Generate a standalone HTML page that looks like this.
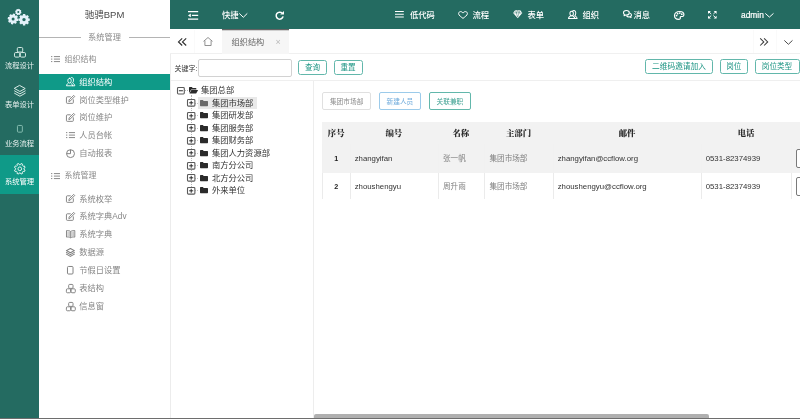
<!DOCTYPE html>
<html lang="zh-CN">
<head>
<meta charset="utf-8">
<title>驰骋BPM</title>
<style>
*{box-sizing:border-box;margin:0;padding:0}
html,body{width:800px;height:419px;overflow:hidden;background:#fff}
body{position:relative;font-family:"Liberation Sans","Noto Sans CJK SC",sans-serif;color:#333;font-size:8px;line-height:1}
#app{position:absolute;left:0;top:0;width:800px;height:419px;overflow:hidden;will-change:transform;transform:translateZ(0)}
.abs{position:absolute}
.t{position:absolute;white-space:nowrap;line-height:10px;height:10px}
svg{position:absolute;overflow:visible}
/* dark sidebar */
#s1{position:absolute;left:0;top:0;width:39px;height:418px;background:#246b61}
#s1 .act{position:absolute;left:0;top:155px;width:39px;height:39px;background:#0f9a88}
#s1 .lb{position:absolute;left:0;width:39px;text-align:center;color:#e8f1ef;font-size:7.3px;line-height:9px;height:9px;white-space:nowrap}
/* second sidebar */
#s2{position:absolute;left:39px;top:0;width:131px;height:418px;background:#fff}
#s2 .title{position:absolute;left:0;top:9.2px;width:131px;text-align:center;font-size:9.5px;line-height:12px;color:#4a4a4a}
#s2 .hr{position:absolute;top:37px;height:1px;background:#b4b4b4}
#s2 .sub{position:absolute;left:0;top:32.5px;width:131px;text-align:center;font-size:8.2px;line-height:10px;color:#8a8a8a}
#s2 .g{position:absolute;left:25.5px;font-size:8px;line-height:10px;height:10px;color:#8c8c8c;white-space:nowrap}
#s2 .i{position:absolute;left:40.3px;font-size:8.25px;line-height:10px;height:10px;color:#868686;white-space:nowrap}
#s2 .on{position:absolute;left:0;top:73.5px;width:131.5px;height:16.5px;background:#0f9a88}
/* header */
#hd{position:absolute;left:170px;top:0;width:630px;height:29px;background:#246b61}
#hd .t{color:#fff;font-size:8.3px;top:10px;font-weight:500}
/* tabs */
#tabs{position:absolute;left:170px;top:29px;width:630px;height:25px;background:#fff;border-bottom:1px solid #f0f0f0}
#tabs .cur{position:absolute;left:52px;top:0;width:67px;height:24.5px;background:#f6f6f6;border-top:1px solid #636363;box-shadow:inset 0 1px 0 #cfcfcf}
.btn{position:absolute;border:1px solid #62b7ab;border-radius:2.5px;background:#fff;color:#1b9483;text-align:center;white-space:nowrap}
.tt{font-size:8.3px;color:#333;line-height:10.4px;height:10.4px}
.b2{border:1px solid #ddd;border-radius:2px;background:#fff;font-size:6.7px;line-height:17px;text-align:center;white-space:nowrap}
.th{font-family:"Liberation Serif","Noto Serif CJK SC",serif;font-weight:900;font-size:8.4px;color:#2a2a2a;text-align:center;line-height:11px;height:11px}
.td{font-size:7.8px;color:#333;line-height:10px}
.td.zh{font-weight:400;font-size:7.6px;color:#808080}
</style>
</head>
<body>
<div id="app">
<div id="s1">
  <div class="act"></div>
  <svg style="left:0;top:0" width="39" height="30" viewBox="0 0 39 30"><g fill="#e4f2fa"><path fill-rule="evenodd" d="M17.28 18.61 L18.40 19.02 L17.98 21.08 L16.79 21.03 L16.30 21.75 L16.80 22.83 L15.05 24.00 L14.25 23.11 L13.39 23.28 L12.98 24.40 L10.92 23.98 L10.97 22.79 L10.25 22.30 L9.17 22.80 L8.00 21.05 L8.89 20.25 L8.72 19.39 L7.60 18.98 L8.02 16.92 L9.21 16.97 L9.70 16.25 L9.20 15.17 L10.95 14.00 L11.75 14.89 L12.61 14.72 L13.02 13.60 L15.08 14.02 L15.03 15.21 L15.75 15.70 L16.83 15.20 L18.00 16.95 L17.11 17.75Z M11.60 19.00 a1.5 1.5 0 1 0 3 0 a1.5 1.5 0 1 0 -3 0Z"/><path fill-rule="evenodd" d="M28.51 18.38 L29.79 18.57 L29.79 20.83 L28.51 21.02 L28.15 21.88 L28.92 22.92 L27.32 24.52 L26.28 23.75 L25.42 24.11 L25.23 25.39 L22.97 25.39 L22.78 24.11 L21.92 23.75 L20.88 24.52 L19.28 22.92 L20.05 21.88 L19.69 21.02 L18.41 20.83 L18.41 18.57 L19.69 18.38 L20.05 17.52 L19.28 16.48 L20.88 14.88 L21.92 15.65 L22.78 15.29 L22.97 14.01 L25.23 14.01 L25.42 15.29 L26.28 15.65 L27.32 14.88 L28.92 16.48 L28.15 17.52Z M22.30 19.60 a1.7 1.7 0 1 0 3.4 0 a1.7 1.7 0 1 0 -3.4 0Z"/><path fill-rule="evenodd" d="M21.00 12.03 L21.48 12.33 L21.11 13.52 L20.54 13.50 L20.19 13.93 L20.32 14.48 L19.21 15.07 L18.82 14.65 L18.27 14.70 L17.97 15.18 L16.78 14.81 L16.80 14.24 L16.37 13.89 L15.82 14.02 L15.23 12.91 L15.65 12.52 L15.60 11.97 L15.12 11.67 L15.49 10.48 L16.06 10.50 L16.41 10.07 L16.28 9.52 L17.39 8.93 L17.78 9.35 L18.33 9.30 L18.63 8.82 L19.82 9.19 L19.80 9.76 L20.23 10.11 L20.78 9.98 L21.37 11.09 L20.95 11.48Z M17.30 12.00 a1.0 1.0 0 1 0 2 0 a1.0 1.0 0 1 0 -2 0Z"/></g></svg>
  <svg style="left:14px;top:47px" width="12" height="10.6" viewBox="0 0 12 10.7"  preserveAspectRatio="none"><g fill="none" stroke="#d9ece7" stroke-width="1"><rect x="3.3" y="0.5" width="5.4" height="4.6" rx="1.2"/><rect x="0.5" y="5.6" width="5.2" height="4.6" rx="1.2"/><rect x="6.3" y="5.6" width="5.2" height="4.6" rx="1.2"/></g></svg>
  <svg style="left:14.2px;top:85px" width="11.8" height="11.8" viewBox="0 0 12 12"  preserveAspectRatio="none"><g fill="none" stroke="#d9ece7" stroke-width="1" stroke-linejoin="round" stroke-linecap="round"><path d="M6 0.6 L11.4 3.6 L6 6.6 L0.6 3.6Z"/><path d="M0.6 6 L6 9 L11.4 6"/><path d="M0.6 8.4 L6 11.4 L11.4 8.4"/></g></svg>
  <svg style="left:16.8px;top:125.2px" width="5.8" height="7.6" viewBox="0 0 5.8 7.6"  preserveAspectRatio="none"><rect x="0.45" y="0.45" width="4.8999999999999995" height="6.699999999999999" rx="1" fill="none" stroke="#8fc4b8" stroke-width="0.9"/></svg>
  <svg style="left:14px;top:163px" width="11.6" height="11.6" viewBox="0 0 12 12"  preserveAspectRatio="none"><g fill="none" stroke="#e6f5f1" stroke-width="1" stroke-linejoin="round"><path d="M10.26 6.57 L11.46 7.26 L10.75 8.96 L9.42 8.61 L8.61 9.42 L8.96 10.75 L7.26 11.46 L6.57 10.26 L5.43 10.26 L4.74 11.46 L3.04 10.75 L3.39 9.42 L2.58 8.61 L1.25 8.96 L0.54 7.26 L1.74 6.57 L1.74 5.43 L0.54 4.74 L1.25 3.04 L2.58 3.39 L3.39 2.58 L3.04 1.25 L4.74 0.54 L5.43 1.74 L6.57 1.74 L7.26 0.54 L8.96 1.25 L8.61 2.58 L9.42 3.39 L10.75 3.04 L11.46 4.74 L10.26 5.43Z"/><circle cx="6" cy="6" r="1.9"/></g></svg>
  <div class="lb" style="top:60.5px">流程设计</div>
  <div class="lb" style="top:99.5px">表单设计</div>
  <div class="lb" style="top:138.5px">业务流程</div>
  <div class="lb" style="top:177px;color:#fff">系统管理</div>
</div>
<div id="s2">
  <div class="title">驰骋BPM</div>
  <div class="hr" style="left:0;width:42px"></div>
  <div class="hr" style="left:90px;width:41px"></div>
  <div class="sub">系统管理</div>
  <div class="g" style="top:54.7px">组织结构</div>
  <div class="on"></div>
  <div class="i" style="top:77.9px;color:#fff">组织结构</div>
  <div class="i" style="top:95.5px">岗位类型维护</div>
  <div class="i" style="top:113px">岗位维护</div>
  <div class="i" style="top:131.2px">人员台帐</div>
  <div class="i" style="top:149.3px">自动报表</div>
  <div class="g" style="top:171.4px">系统管理</div>
  <div class="i" style="top:194.7px">系统枚举</div>
  <div class="i" style="top:212.1px">系统字典Adv</div>
  <div class="i" style="top:230.3px">系统字典</div>
  <div class="i" style="top:248.1px">数据源</div>
  <div class="i" style="top:265.7px">节假日设置</div>
  <div class="i" style="top:283.9px">表结构</div>
  <div class="i" style="top:301.9px">信息窗</div>
  <svg style="left:11.7px;top:56px" width="9" height="6.2" viewBox="0 0 9 6.2"  preserveAspectRatio="none"><g stroke="#7c7c7c" stroke-width="0.9" fill="none"><path d="M0 0.6h1.3M0 3.1h1.3M0 5.6h1.3M2.9 0.6h6.1M2.9 3.1h6.1M2.9 5.6h6.1"/></g></svg>
  <svg style="left:26.7px;top:77.1px" width="9.3" height="9.3" viewBox="0 0 10 9.2" preserveAspectRatio="none"><g fill="none" stroke="#fff" stroke-width="0.95" stroke-linejoin="round" stroke-linecap="round"><path d="M3.8 1.3 C4.9 1.3 5.6 2.3 5.6 3.6 C5.6 4.9 4.9 6 3.8 6 C2.7 6 2 4.9 2 3.6 C2 2.3 2.7 1.3 3.8 1.3Z"/><path d="M2.7 5.8 C2.5 6.8 0.6 6.7 0.5 8.7 H9.5 C9.4 6.9 7.7 6.7 7.1 5.7 C7.8 5.1 8.1 4.1 8.1 3.1 C8.1 1.6 7.3 0.5 6.2 0.5 C5.5 0.5 5 0.8 4.6 1.4"/><path d="M4.9 5.8 C5.2 6.7 7 6.8 7.2 8.7"/></g></svg>
  <svg style="left:26.8px;top:95px" width="9.2" height="8.8" viewBox="0 0 9.2 8.8"  preserveAspectRatio="none"><g fill="none" stroke="#7c7c7c" stroke-width="0.9" stroke-linejoin="round" stroke-linecap="round"><path d="M4.3 1.8 H1.3 Q0.45 1.8 0.45 2.7 V7.5 Q0.45 8.35 1.3 8.35 H6.5 Q7.35 8.35 7.35 7.5 V4.8"/><path d="M2.9 6.2 L3.2 4.8 L7.7 0.4 L8.8 1.5 L4.3 5.9 Z"/></g></svg>
  <svg style="left:26.8px;top:113.2px" width="9.2" height="8.8" viewBox="0 0 9.2 8.8"  preserveAspectRatio="none"><g fill="none" stroke="#7c7c7c" stroke-width="0.9" stroke-linejoin="round" stroke-linecap="round"><path d="M4.3 1.8 H1.3 Q0.45 1.8 0.45 2.7 V7.5 Q0.45 8.35 1.3 8.35 H6.5 Q7.35 8.35 7.35 7.5 V4.8"/><path d="M2.9 6.2 L3.2 4.8 L7.7 0.4 L8.8 1.5 L4.3 5.9 Z"/></g></svg>
  <svg style="left:26.7px;top:132.4px" width="9" height="6.2" viewBox="0 0 9 6.2"  preserveAspectRatio="none"><g stroke="#7c7c7c" stroke-width="0.9" fill="none"><path d="M0 0.6h1.3M0 3.1h1.3M0 5.6h1.3M2.9 0.6h6.1M2.9 3.1h6.1M2.9 5.6h6.1"/></g></svg>
  <svg style="left:26.8px;top:148.7px" width="9" height="9.1" viewBox="0 0 8.6 8.8"  preserveAspectRatio="none"><g fill="none" stroke="#7c7c7c" stroke-width="0.9"><circle cx="4.3" cy="4.5" r="3.8"/><path d="M4.3 0.7 V4.5 H0.5"/></g></svg>
  <svg style="left:11.7px;top:172.7px" width="9" height="6.2" viewBox="0 0 9 6.2"  preserveAspectRatio="none"><g stroke="#7c7c7c" stroke-width="0.9" fill="none"><path d="M0 0.6h1.3M0 3.1h1.3M0 5.6h1.3M2.9 0.6h6.1M2.9 3.1h6.1M2.9 5.6h6.1"/></g></svg>
  <svg style="left:26.8px;top:194.3px" width="9.2" height="8.8" viewBox="0 0 9.2 8.8"  preserveAspectRatio="none"><g fill="none" stroke="#7c7c7c" stroke-width="0.9" stroke-linejoin="round" stroke-linecap="round"><path d="M4.3 1.8 H1.3 Q0.45 1.8 0.45 2.7 V7.5 Q0.45 8.35 1.3 8.35 H6.5 Q7.35 8.35 7.35 7.5 V4.8"/><path d="M2.9 6.2 L3.2 4.8 L7.7 0.4 L8.8 1.5 L4.3 5.9 Z"/></g></svg>
  <svg style="left:26.8px;top:212px" width="9.2" height="8.8" viewBox="0 0 9.2 8.8"  preserveAspectRatio="none"><g fill="none" stroke="#7c7c7c" stroke-width="0.9" stroke-linejoin="round" stroke-linecap="round"><path d="M4.3 1.8 H1.3 Q0.45 1.8 0.45 2.7 V7.5 Q0.45 8.35 1.3 8.35 H6.5 Q7.35 8.35 7.35 7.5 V4.8"/><path d="M2.9 6.2 L3.2 4.8 L7.7 0.4 L8.8 1.5 L4.3 5.9 Z"/></g></svg>
  <svg style="left:26.6px;top:230.3px" width="9.3" height="8.2" viewBox="0 0 9.3 8.2"  preserveAspectRatio="none"><g fill="none" stroke="#7c7c7c" stroke-width="0.9" stroke-linejoin="round"><path d="M4.65 1.5 C3.4 0.5 1.8 0.4 0.5 0.6 V7.1 C1.8 6.9 3.4 7 4.65 7.8 C5.9 7 7.5 6.9 8.8 7.1 V0.6 C7.5 0.4 5.9 0.5 4.65 1.5Z"/><path d="M4.65 1.5V7.8"/><path d="M2 1.3V6.3M3.3 1.6V6.6M6 1.6V6.6M7.3 1.3V6.3" stroke-width="0.55"/></g></svg>
  <svg style="left:27px;top:248px" width="8.8" height="8.8" viewBox="0 0 12 12"  preserveAspectRatio="none"><g fill="none" stroke="#7c7c7c" stroke-width="1.45" stroke-linejoin="round" stroke-linecap="round"><path d="M6 0.6 L11.4 3.6 L6 6.6 L0.6 3.6Z"/><path d="M0.6 6 L6 9 L11.4 6"/><path d="M0.6 8.4 L6 11.4 L11.4 8.4"/></g></svg>
  <svg style="left:27.6px;top:266.1px" width="6.5" height="8.5" viewBox="0 0 6.5 8.5"  preserveAspectRatio="none"><rect x="0.475" y="0.475" width="5.55" height="7.55" rx="1" fill="none" stroke="#7c7c7c" stroke-width="0.95"/></svg>
  <svg style="left:26.5px;top:283.5px" width="9.7" height="9.2" viewBox="0 0 12 10.7"  preserveAspectRatio="none"><g fill="none" stroke="#7c7c7c" stroke-width="1.1"><rect x="3.3" y="0.5" width="5.4" height="4.6" rx="1.2"/><rect x="0.5" y="5.6" width="5.2" height="4.6" rx="1.2"/><rect x="6.3" y="5.6" width="5.2" height="4.6" rx="1.2"/></g></svg>
  <svg style="left:26.5px;top:301.5px" width="9.7" height="9.2" viewBox="0 0 12 10.7"  preserveAspectRatio="none"><g fill="none" stroke="#7c7c7c" stroke-width="1.1"><rect x="3.3" y="0.5" width="5.4" height="4.6" rx="1.2"/><rect x="0.5" y="5.6" width="5.2" height="4.6" rx="1.2"/><rect x="6.3" y="5.6" width="5.2" height="4.6" rx="1.2"/></g></svg>
</div>
<div class="abs" style="left:170px;top:29px;width:1px;height:389px;background:#ececec"></div>
<div id="hd">
  <div class="t" style="left:52px">快捷</div>
  <div class="t" style="left:240px">低代码</div>
  <div class="t" style="left:302.5px">流程</div>
  <div class="t" style="left:357.5px">表单</div>
  <div class="t" style="left:412.5px">组织</div>
  <div class="t" style="left:463.5px">消息</div>
  <div class="t" style="left:571px;font-size:8.4px;-webkit-text-stroke:0.2px #fff">admin</div>
  <svg style="left:17.8px;top:11px" width="10.2" height="8.8" viewBox="0 0 10.2 8.8"  preserveAspectRatio="none"><g stroke="#fff" stroke-width="1.25" fill="none"><path d="M0 0.7H10.2M3.9 4.4H10.2M0 8.1H10.2"/></g><path d="M0 4.4L2.8 2.5V6.3Z" fill="#fff"/></svg>
  <svg style="left:69.2px;top:13px" width="8.6" height="4.8" viewBox="0 0 8.6 4.8"  preserveAspectRatio="none"><path d="M0.3 0.4L4.3 4.3L8.299999999999999 0.4" fill="none" stroke="#fff" stroke-width="1"/></svg>
  <svg style="left:104.5px;top:11px" width="9" height="8.8" viewBox="0 0 9 8.8"  preserveAspectRatio="none"><path d="M7.3 2.3A3.5 3.5 0 1 0 8.1 5.4" fill="none" stroke="#fff" stroke-width="1.5"/><path d="M5.2 3.6H9V0Z" fill="#fff"/></svg>
  <svg style="left:225.2px;top:11px" width="8.8" height="6.6" viewBox="0 0 8.8 6.6"  preserveAspectRatio="none"><path d="M0 0.5H8.8M0 3.3H8.8M0 6.05H8.8" stroke="#fff" stroke-width="1.05" fill="none"/></svg>
  <svg style="left:288px;top:10.5px" width="10" height="8" viewBox="0 0 10 8"  preserveAspectRatio="none"><path d="M5 7.4 C3.6 6.2 0.6 4.4 0.6 2.6 C0.6 1.4 1.5 0.6 2.6 0.6 C3.6 0.6 4.5 1.2 5 2.1 C5.5 1.2 6.4 0.6 7.4 0.6 C8.5 0.6 9.4 1.4 9.4 2.6 C9.4 4.4 6.4 6.2 5 7.4Z" fill="none" stroke="#fff" stroke-width="1" stroke-linejoin="round"/></svg>
  <svg style="left:343px;top:10.2px" width="9.4" height="8.4" viewBox="0 0 9.4 8.4"  preserveAspectRatio="none"><path d="M2.1 0.2H7.3L9.3 2.9L4.7 8.3L0.1 2.9Z" fill="#fff"/><path d="M0.6 2.9H8.8M3.3 2.9L4.7 7.2L6.1 2.9M3.3 2.9L2.6 0.6M6.1 2.9L6.8 0.6M3.3 2.9L4.7 0.5L6.1 2.9" fill="none" stroke="#246b61" stroke-width="0.45"/></svg>
  <svg style="left:397.9px;top:9.6px" width="9.6" height="9" viewBox="0 0 10 9.2" preserveAspectRatio="none"><g fill="none" stroke="#fff" stroke-width="1.05" stroke-linejoin="round" stroke-linecap="round"><path d="M3.8 1.3 C4.9 1.3 5.6 2.3 5.6 3.6 C5.6 4.9 4.9 6 3.8 6 C2.7 6 2 4.9 2 3.6 C2 2.3 2.7 1.3 3.8 1.3Z"/><path d="M2.7 5.8 C2.5 6.8 0.6 6.7 0.5 8.7 H9.5 C9.4 6.9 7.7 6.7 7.1 5.7 C7.8 5.1 8.1 4.1 8.1 3.1 C8.1 1.6 7.3 0.5 6.2 0.5 C5.5 0.5 5 0.8 4.6 1.4"/><path d="M4.9 5.8 C5.2 6.7 7 6.8 7.2 8.7"/></g></svg>
  <svg style="left:453px;top:10px" width="9" height="8.2" viewBox="0 0 9 8.2"  preserveAspectRatio="none"><g fill="none" stroke="#fff" stroke-width="1.1" stroke-linejoin="round"><path d="M3.4 0.5 C5 0.5 6.3 1.5 6.3 2.8 C6.3 4.1 5 5.1 3.4 5.1 C3.1 5.1 2.8 5.1 2.5 5 L1.1 5.8 L1.4 4.5 C0.8 4.1 0.5 3.5 0.5 2.8 C0.5 1.5 1.8 0.5 3.4 0.5Z"/><path d="M6.9 3.2 C7.9 3.5 8.5 4.2 8.5 5 C8.5 5.6 8.2 6.1 7.7 6.5 L8 7.6 L6.8 6.9 C6.5 7 6.2 7 5.9 7 C4.9 7 4 6.6 3.6 5.9"/></g></svg>
  <svg style="left:504px;top:11.2px" width="10.4" height="8.8" viewBox="0 0 10.4 8.8"  preserveAspectRatio="none"><g fill="none" stroke="#fff" stroke-width="1.2" stroke-linejoin="round"><path d="M5.6 0.5 C8.2 0.5 9.9 2 9.9 3.6 C9.9 5.2 8.6 5.6 7.6 5.5 C6.6 5.4 6.1 5.9 6.3 6.7 C6.5 7.6 5.9 8.3 4.8 8.3 C2.3 8.3 0.5 6.6 0.5 4.4 C0.5 2.2 2.6 0.5 5.6 0.5Z"/></g><g fill="#fff"><circle cx="2.6" cy="4.6" r="0.9"/><circle cx="3.6" cy="2.7" r="0.9"/><circle cx="5.8" cy="2.1" r="0.9"/><circle cx="7.8" cy="3.2" r="0.9"/></g></svg>
  <svg style="left:538.2px;top:11px" width="8.6" height="7.6" viewBox="0 0 8.6 7.6"  preserveAspectRatio="none"><g fill="#fff"><path d="M0 0H2.9L0 2.9Z M8.6 0V2.9L5.7 0Z M0 7.6V4.7L2.9 7.6Z M8.6 7.6H5.7L8.6 4.7Z"/></g><path d="M0.8 0.8L3.2 3M7.8 0.8L5.4 3M0.8 6.8L3.2 4.6M7.8 6.8L5.4 4.6" stroke="#fff" stroke-width="1" fill="none"/></svg>
  <svg style="left:595px;top:13.2px" width="8.8" height="4.6" viewBox="0 0 8.8 4.6"  preserveAspectRatio="none"><path d="M0.3 0.4L4.4 4.1L8.5 0.4" fill="none" stroke="#fff" stroke-width="1"/></svg>
</div>
<div id="tabs">
  <div class="cur"></div>
  <svg style="left:8.1px;top:9.1px" width="8.4" height="7.8" viewBox="0 0 8.4 7.8"  preserveAspectRatio="none"><path d="M4.2 0.3L0.5 3.9L4.2 7.5 M8.200000000000001 0.3L4.5 3.9L8.200000000000001 7.5" fill="none" stroke="#2e2e2e" stroke-width="1.15"/></svg>
  <svg style="left:33px;top:8.2px" width="10" height="9" viewBox="0 0 10 9"  preserveAspectRatio="none"><path d="M0.5 4.4L5 0.5L9.5 4.4M1.9 3.6V8.5H8.1V3.6" fill="none" stroke="#777" stroke-width="0.8" stroke-linejoin="round"/></svg>
  <svg style="left:590px;top:9.1px" width="8.2" height="7.8" viewBox="0 0 8.2 7.8"  preserveAspectRatio="none"><path d="M0.2 0.3L3.8 3.9L0.2 7.5 M4.1 0.3L7.699999999999999 3.9L4.1 7.5" fill="none" stroke="#3a3a3a" stroke-width="1.05"/></svg>
  <svg style="left:614px;top:10.9px" width="8.8" height="4.8" viewBox="0 0 8.8 4.8"  preserveAspectRatio="none"><path d="M0.3 0.4L4.4 4.3L8.5 0.4" fill="none" stroke="#4a4a4a" stroke-width="1"/></svg>
  <div class="abs" style="left:24px;top:1px;width:1px;height:23px;background:#fafafa"></div>
  <div class="abs" style="left:583px;top:1px;width:1px;height:23px;background:#fafafa"></div>
  <div class="abs" style="left:605.5px;top:1px;width:1px;height:23px;background:#fafafa"></div>
  <div class="t" style="left:61.5px;top:8.5px;font-size:8.2px;color:#666">组织结构</div>
  <div class="t" style="left:105.5px;top:8px;font-size:9px;color:#bbb">×</div>
</div>
<!-- toolbar -->
<div class="t" style="left:174.5px;top:63.5px;font-size:7px;color:#333">关键字:</div>
<div class="abs" style="left:198px;top:59px;width:93.5px;height:17.5px;border:1px solid #d2d2d2;border-radius:2px;background:#fff"></div>
<div class="btn" style="left:298px;top:59.8px;width:29.2px;height:15px;font-size:7.6px;line-height:14.2px">查询</div>
<div class="btn" style="left:333.5px;top:59.8px;width:29.2px;height:15px;font-size:7.6px;line-height:14.2px">重置</div>
<div class="btn" style="left:645px;top:58.5px;width:68px;height:15px;font-size:7.7px;line-height:14px">二维码邀请加入</div>
<div class="btn" style="left:719.5px;top:58.5px;width:28.5px;height:15px;font-size:7.6px;line-height:14px">岗位</div>
<div class="btn" style="left:754.5px;top:58.5px;width:45px;height:15px;font-size:7.6px;line-height:14px">岗位类型</div>
<div class="abs" style="left:171px;top:80px;width:629px;height:1px;background:#efefef"></div>
<div class="abs" style="left:313px;top:81px;width:1px;height:337px;background:#ededed"></div>
<!-- tree -->
<div class="abs" style="left:198px;top:96.8px;width:58.5px;height:12px;background:#e9e9e9"></div>
<div class="abs" style="left:190.7px;top:94.5px;width:0;height:96.0px;border-left:1px dotted #b5b5b5"></div>
<div class="abs" style="left:184.5px;top:90.2px;width:3.5px;height:0;border-top:1px dotted #b5b5b5"></div>
<svg style="left:176.7px;top:86.55px" width="7.8" height="7.5" viewBox="0 0 7.8 7.5"  preserveAspectRatio="none"><rect x="0.5" y="0.5" width="6.8" height="6.5" rx="0.9" fill="#fff" stroke="#5a5a5a" stroke-width="1.1"/><path d="M1.9 3.75 H5.9" stroke="#222" stroke-width="0.95" fill="none"/></svg>
<svg style="left:189.2px;top:87.2px" width="9.1" height="6.6" viewBox="0 0 8.4 6" preserveAspectRatio="none"><path d="M0 0.6 Q0 0 0.6 0 H2.6 L3.4 0.8 H6.2 Q6.8 0.8 6.8 1.4 V2.2 H2 L0 5.4Z" fill="#2b2b2b"/><path d="M2.2 2.7 H8.4 L6.6 6 H0.4Z" fill="#2b2b2b"/></svg>
<div class="t tt" style="left:201px;top:85.40px">集团总部</div>
<div class="abs" style="left:195.4px;top:102.50px;width:2.5px;height:0;border-top:1px dotted #c4c4c4"></div>
<svg style="left:187.0px;top:99.2px" width="8.4" height="7.6" viewBox="0 0 8.4 7.6"  preserveAspectRatio="none"><rect x="0.5" y="0.5" width="7.4" height="6.6" rx="0.9" fill="#fff" stroke="#5a5a5a" stroke-width="1.1"/><path d="M2.2 3.8 H6.2 M4.2 1.7999999999999998 V5.8" stroke="#222" stroke-width="0.95" fill="none"/></svg>
<svg style="left:200.3px;top:99.9px" width="8" height="6.3" viewBox="0 0 7.6 5.6" preserveAspectRatio="none"><path d="M0 0.6 Q0 0 0.6 0 H2.7 L3.5 0.8 H7 Q7.6 0.8 7.6 1.4 V5 Q7.6 5.6 7 5.6 H0.6 Q0 5.6 0 5Z" fill="#6a6a6a"/></svg>
<div class="t tt" style="left:211.9px;top:97.80px">集团市场部</div>
<div class="abs" style="left:195.4px;top:115.00px;width:2.5px;height:0;border-top:1px dotted #c4c4c4"></div>
<svg style="left:187.0px;top:111.7px" width="8.4" height="7.6" viewBox="0 0 8.4 7.6"  preserveAspectRatio="none"><rect x="0.5" y="0.5" width="7.4" height="6.6" rx="0.9" fill="#fff" stroke="#5a5a5a" stroke-width="1.1"/><path d="M2.2 3.8 H6.2 M4.2 1.7999999999999998 V5.8" stroke="#222" stroke-width="0.95" fill="none"/></svg>
<svg style="left:200.3px;top:112.4px" width="8" height="6.3" viewBox="0 0 7.6 5.6" preserveAspectRatio="none"><path d="M0 0.6 Q0 0 0.6 0 H2.7 L3.5 0.8 H7 Q7.6 0.8 7.6 1.4 V5 Q7.6 5.6 7 5.6 H0.6 Q0 5.6 0 5Z" fill="#2b2b2b"/></svg>
<div class="t tt" style="left:211.9px;top:110.30px">集团研发部</div>
<div class="abs" style="left:195.4px;top:127.50px;width:2.5px;height:0;border-top:1px dotted #c4c4c4"></div>
<svg style="left:187.0px;top:124.2px" width="8.4" height="7.6" viewBox="0 0 8.4 7.6"  preserveAspectRatio="none"><rect x="0.5" y="0.5" width="7.4" height="6.6" rx="0.9" fill="#fff" stroke="#5a5a5a" stroke-width="1.1"/><path d="M2.2 3.8 H6.2 M4.2 1.7999999999999998 V5.8" stroke="#222" stroke-width="0.95" fill="none"/></svg>
<svg style="left:200.3px;top:124.9px" width="8" height="6.3" viewBox="0 0 7.6 5.6" preserveAspectRatio="none"><path d="M0 0.6 Q0 0 0.6 0 H2.7 L3.5 0.8 H7 Q7.6 0.8 7.6 1.4 V5 Q7.6 5.6 7 5.6 H0.6 Q0 5.6 0 5Z" fill="#2b2b2b"/></svg>
<div class="t tt" style="left:211.9px;top:122.80px">集团服务部</div>
<div class="abs" style="left:195.4px;top:140.00px;width:2.5px;height:0;border-top:1px dotted #c4c4c4"></div>
<svg style="left:187.0px;top:136.7px" width="8.4" height="7.6" viewBox="0 0 8.4 7.6"  preserveAspectRatio="none"><rect x="0.5" y="0.5" width="7.4" height="6.6" rx="0.9" fill="#fff" stroke="#5a5a5a" stroke-width="1.1"/><path d="M2.2 3.8 H6.2 M4.2 1.7999999999999998 V5.8" stroke="#222" stroke-width="0.95" fill="none"/></svg>
<svg style="left:200.3px;top:137.4px" width="8" height="6.3" viewBox="0 0 7.6 5.6" preserveAspectRatio="none"><path d="M0 0.6 Q0 0 0.6 0 H2.7 L3.5 0.8 H7 Q7.6 0.8 7.6 1.4 V5 Q7.6 5.6 7 5.6 H0.6 Q0 5.6 0 5Z" fill="#2b2b2b"/></svg>
<div class="t tt" style="left:211.9px;top:135.30px">集团财务部</div>
<div class="abs" style="left:195.4px;top:152.50px;width:2.5px;height:0;border-top:1px dotted #c4c4c4"></div>
<svg style="left:187.0px;top:149.2px" width="8.4" height="7.6" viewBox="0 0 8.4 7.6"  preserveAspectRatio="none"><rect x="0.5" y="0.5" width="7.4" height="6.6" rx="0.9" fill="#fff" stroke="#5a5a5a" stroke-width="1.1"/><path d="M2.2 3.8 H6.2 M4.2 1.7999999999999998 V5.8" stroke="#222" stroke-width="0.95" fill="none"/></svg>
<svg style="left:200.3px;top:149.9px" width="8" height="6.3" viewBox="0 0 7.6 5.6" preserveAspectRatio="none"><path d="M0 0.6 Q0 0 0.6 0 H2.7 L3.5 0.8 H7 Q7.6 0.8 7.6 1.4 V5 Q7.6 5.6 7 5.6 H0.6 Q0 5.6 0 5Z" fill="#2b2b2b"/></svg>
<div class="t tt" style="left:211.9px;top:147.80px">集团人力资源部</div>
<div class="abs" style="left:195.4px;top:165.00px;width:2.5px;height:0;border-top:1px dotted #c4c4c4"></div>
<svg style="left:187.0px;top:161.7px" width="8.4" height="7.6" viewBox="0 0 8.4 7.6"  preserveAspectRatio="none"><rect x="0.5" y="0.5" width="7.4" height="6.6" rx="0.9" fill="#fff" stroke="#5a5a5a" stroke-width="1.1"/><path d="M2.2 3.8 H6.2 M4.2 1.7999999999999998 V5.8" stroke="#222" stroke-width="0.95" fill="none"/></svg>
<svg style="left:200.3px;top:162.4px" width="8" height="6.3" viewBox="0 0 7.6 5.6" preserveAspectRatio="none"><path d="M0 0.6 Q0 0 0.6 0 H2.7 L3.5 0.8 H7 Q7.6 0.8 7.6 1.4 V5 Q7.6 5.6 7 5.6 H0.6 Q0 5.6 0 5Z" fill="#2b2b2b"/></svg>
<div class="t tt" style="left:211.9px;top:160.30px">南方分公司</div>
<div class="abs" style="left:195.4px;top:177.50px;width:2.5px;height:0;border-top:1px dotted #c4c4c4"></div>
<svg style="left:187.0px;top:174.2px" width="8.4" height="7.6" viewBox="0 0 8.4 7.6"  preserveAspectRatio="none"><rect x="0.5" y="0.5" width="7.4" height="6.6" rx="0.9" fill="#fff" stroke="#5a5a5a" stroke-width="1.1"/><path d="M2.2 3.8 H6.2 M4.2 1.7999999999999998 V5.8" stroke="#222" stroke-width="0.95" fill="none"/></svg>
<svg style="left:200.3px;top:174.9px" width="8" height="6.3" viewBox="0 0 7.6 5.6" preserveAspectRatio="none"><path d="M0 0.6 Q0 0 0.6 0 H2.7 L3.5 0.8 H7 Q7.6 0.8 7.6 1.4 V5 Q7.6 5.6 7 5.6 H0.6 Q0 5.6 0 5Z" fill="#2b2b2b"/></svg>
<div class="t tt" style="left:211.9px;top:172.80px">北方分公司</div>
<div class="abs" style="left:195.4px;top:190.00px;width:2.5px;height:0;border-top:1px dotted #c4c4c4"></div>
<svg style="left:187.0px;top:186.7px" width="8.4" height="7.6" viewBox="0 0 8.4 7.6"  preserveAspectRatio="none"><rect x="0.5" y="0.5" width="7.4" height="6.6" rx="0.9" fill="#fff" stroke="#5a5a5a" stroke-width="1.1"/><path d="M2.2 3.8 H6.2 M4.2 1.7999999999999998 V5.8" stroke="#222" stroke-width="0.95" fill="none"/></svg>
<svg style="left:200.3px;top:187.4px" width="8" height="6.3" viewBox="0 0 7.6 5.6" preserveAspectRatio="none"><path d="M0 0.6 Q0 0 0.6 0 H2.7 L3.5 0.8 H7 Q7.6 0.8 7.6 1.4 V5 Q7.6 5.6 7 5.6 H0.6 Q0 5.6 0 5Z" fill="#2b2b2b"/></svg>
<div class="t tt" style="left:211.9px;top:185.30px">外来单位</div>
<!-- right panel -->
<div class="abs b2" style="left:322.3px;top:92px;width:48.7px;height:18.4px;border-color:#e0e0e0;color:#8c8c8c">集团市场部</div>
<div class="abs b2" style="left:379px;top:92px;width:41.8px;height:18.4px;border-color:#9ccbea;color:#6fabdc">新建人员</div>
<div class="abs b2" style="left:428.8px;top:92px;width:42.2px;height:18.4px;border-color:#62b7ab;color:#3fa193">关联兼职</div>
<div class="abs" style="left:322.3px;top:121.7px;width:478px;height:50.89999999999999px;background:#f2f2f2"></div>
<div class="abs" style="left:322.3px;top:144.4px;width:1px;height:28.19999999999999px;background:#f1f1f1"></div>
<div class="abs" style="left:322.3px;top:172.6px;width:1px;height:26.200000000000017px;background:#ebebeb"></div>
<div class="abs" style="left:350px;top:144.4px;width:1px;height:28.19999999999999px;background:#f1f1f1"></div>
<div class="abs" style="left:350px;top:172.6px;width:1px;height:26.200000000000017px;background:#ebebeb"></div>
<div class="abs" style="left:437.5px;top:144.4px;width:1px;height:28.19999999999999px;background:#f1f1f1"></div>
<div class="abs" style="left:437.5px;top:172.6px;width:1px;height:26.200000000000017px;background:#ebebeb"></div>
<div class="abs" style="left:484px;top:144.4px;width:1px;height:28.19999999999999px;background:#f1f1f1"></div>
<div class="abs" style="left:484px;top:172.6px;width:1px;height:26.200000000000017px;background:#ebebeb"></div>
<div class="abs" style="left:553px;top:144.4px;width:1px;height:28.19999999999999px;background:#f1f1f1"></div>
<div class="abs" style="left:553px;top:172.6px;width:1px;height:26.200000000000017px;background:#ebebeb"></div>
<div class="abs" style="left:701px;top:144.4px;width:1px;height:28.19999999999999px;background:#f1f1f1"></div>
<div class="abs" style="left:701px;top:172.6px;width:1px;height:26.200000000000017px;background:#ebebeb"></div>
<div class="abs" style="left:791px;top:144.4px;width:1px;height:28.19999999999999px;background:#f1f1f1"></div>
<div class="abs" style="left:791px;top:172.6px;width:1px;height:26.200000000000017px;background:#ebebeb"></div>
<div class="t th" style="left:322.3px;top:128.2px;width:27.7px">序号</div>
<div class="t th" style="left:350px;top:128.2px;width:87.5px">编号</div>
<div class="t th" style="left:437.5px;top:128.2px;width:46.5px">名称</div>
<div class="t th" style="left:484px;top:128.2px;width:69px">主部门</div>
<div class="t th" style="left:553px;top:128.2px;width:148px">邮件</div>
<div class="t th" style="left:701px;top:128.2px;width:90px">电话</div>
<div class="t td" style="left:322.3px;top:154.0px;width:27.7px;text-align:center;font-weight:bold;color:#222;font-size:7.2px">1</div>
<div class="t td" style="left:354.7px;top:154.0px">zhangyifan</div>
<div class="t td zh" style="left:443.0px;top:154.0px">张一帆</div>
<div class="t td zh" style="left:489.5px;top:154.0px">集团市场部</div>
<div class="t td" style="left:557.7px;top:154.0px">zhangyifan@ccflow.org</div>
<div class="t td" style="left:705.7px;top:154.0px">0531-82374939</div>
<div class="abs" style="left:795.5px;top:149.4px;width:20px;height:18.2px;border:1px solid #7a7a7a;border-radius:2px;background:#fff"></div>
<div class="t td" style="left:322.3px;top:181.7px;width:27.7px;text-align:center;font-weight:bold;color:#222;font-size:7.2px">2</div>
<div class="t td" style="left:354.7px;top:181.7px">zhoushengyu</div>
<div class="t td zh" style="left:443.0px;top:181.7px">周升雨</div>
<div class="t td zh" style="left:489.5px;top:181.7px">集团市场部</div>
<div class="t td" style="left:557.7px;top:181.7px">zhoushengyu@ccflow.org</div>
<div class="t td" style="left:705.7px;top:181.7px">0531-82374939</div>
<div class="abs" style="left:795.5px;top:177.4px;width:20px;height:18.2px;border:1px solid #7a7a7a;border-radius:2px;background:#fff"></div>
<!-- bottom -->
<div class="abs" style="left:313.5px;top:414px;width:395px;height:4px;background:#b0b0b0;border-radius:2px 2px 0 0"></div>
<div class="abs" style="left:0;top:418px;width:800px;height:1px;background:#6e6e6e"></div>
</div>
</body>
</html>
